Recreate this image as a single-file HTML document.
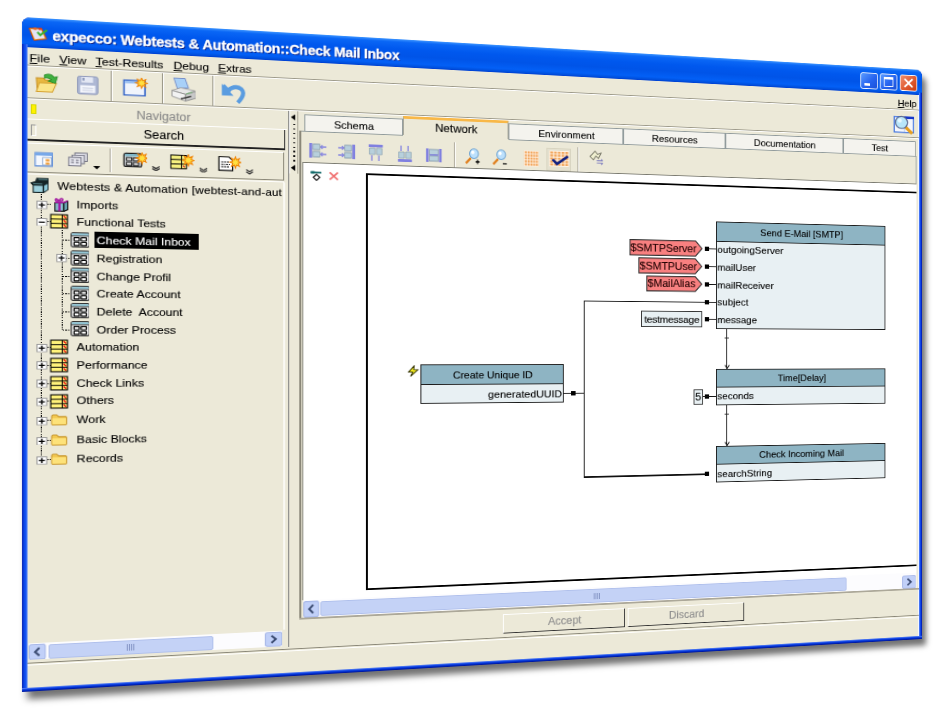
<!DOCTYPE html>
<html><head><meta charset="utf-8"><style>
html,body{margin:0;padding:0;}
body{width:945px;height:709px;overflow:hidden;background:#fff;position:relative;font-family:"Liberation Sans",sans-serif;}
#win{position:absolute;left:0;top:0;width:960px;height:700px;transform-origin:0 0;transform:matrix3d(1.116417692,0.06879210603,0,0.0001940538957,0,0.9642857143,0,0,0,0,1,0,22,17,0,1);box-shadow:5px 8px 7px rgba(0,0,0,0.55);border-radius:8px 8px 0 0;}
.t{position:absolute;white-space:nowrap;line-height:14px;font-size:11px;color:#000;-webkit-text-stroke:0.12px currentColor;}
.tc{position:absolute;left:0;right:0;top:50%;transform:translateY(-50%);text-align:center;font-size:11px;line-height:14px;white-space:nowrap;color:#000;-webkit-text-stroke:0.12px currentColor;}
svg{display:block;}
</style></head><body>
<div id="win">
<div style="position:absolute;left:0px;top:0px;width:960px;height:700px;background:#0831D9;border-radius:8px 8px 0 0;box-shadow:inset -1px -1px 0 #001C98, inset 1px 0 0 #0030C0;"></div>
<div style="position:absolute;left:0px;top:0px;width:960px;height:31px;border-radius:8px 8px 0 0;background:linear-gradient(to bottom,#3D95FF 0%,#0A67F6 10%,#0058EE 35%,#0054E8 60%,#0360F6 85%,#0050DE 95%,#003DD0 100%);"></div>
<div style="position:absolute;left:0px;top:28px;width:4.5px;height:672px;background:linear-gradient(to right,#0018A8 0%,#0A46E8 35%,#1A5AF6 80%,#7EA4F4 100%);"></div>
<div style="position:absolute;left:955.5px;top:28px;width:4.5px;height:672px;background:linear-gradient(to right,#A8C0F4 0%,#2A62F8 20%,#0840E8 60%,#0010A0 100%);"></div>
<div style="position:absolute;left:0px;top:696px;width:960px;height:4px;background:linear-gradient(to bottom,#7E9CEC 0%,#1A50F0 25%,#0030D0 60%,#001090 100%);"></div>
<div style="position:absolute;left:4.5px;top:31px;width:951.0px;height:665px;background:#ECE9D8;box-shadow:inset -1px 0 0 #fff;"></div>
<div class="t" style="left:27.5px;top:10.5px;font-weight:bold;font-size:14px;color:#fff;text-shadow:1px 1px 0 #0A1E80;letter-spacing:-0.2px;-webkit-text-stroke:0.3px #fff;">expecco: Webtests &amp; Automation::Check Mail Inbox</div>
<svg style="position:absolute;left:6.3px;top:9.64px" width="16.91" height="14.22" viewBox="0 0 20 16" preserveAspectRatio="none"><path d="M0.4 1.2 L14 0.8 L19.3 13 L5.7 15.3 Z" fill="#F5A030" stroke="#C04010" stroke-width="0.9"/>
<path d="M2.2 2.4 L13.2 2.1 L17.2 12 L6.6 13.7 Z" fill="#E4E4F6"/>
<path d="M5.4 0.3 H8.6 V3 H5.4 Z" fill="#F06820"/><path d="M10.5 0.4 H14 V2.8 H10.5 Z" fill="#E83818"/>
<path d="M9.4 5.4 L12.4 8.8 L19.6 2.4" stroke="#38B030" stroke-width="2.3" fill="none"/></svg>
<div style="position:absolute;left:882.5px;top:7px;width:22.0px;height:20px;background:linear-gradient(135deg,#5A9CFF,#2664F0 55%,#1A50D8);border:1.2px solid #fff;border-radius:3px;box-sizing:border-box;"></div>
<div style="position:absolute;left:906.6px;top:7px;width:22.0px;height:20px;background:linear-gradient(135deg,#5A9CFF,#2664F0 55%,#1A50D8);border:1.2px solid #fff;border-radius:3px;box-sizing:border-box;"></div>
<div style="position:absolute;left:931.5px;top:7px;width:22.0px;height:20px;background:linear-gradient(135deg,#F09070,#E05A30 55%,#C83A10);border:1.2px solid #fff;border-radius:3px;box-sizing:border-box;"></div>
<div style="position:absolute;left:887.5px;top:19.5px;width:7.0px;height:3.0px;background:#fff;"></div>
<div style="position:absolute;left:911.5px;top:11px;width:12.0px;height:12px;border:1.5px solid #fff;border-top-width:3px;box-sizing:border-box;"></div>
<svg style="position:absolute;left:931.5px;top:7px" width="22" height="20"><path d="M6 5 L16 15 M16 5 L6 15" stroke="#fff" stroke-width="2.4"/></svg>
<div class="t" style="left:6.8px;top:35px;font-size:11.5px;"><u>F</u>ile</div>
<div class="t" style="left:33.8px;top:35px;font-size:11.5px;"><u>V</u>iew</div>
<div class="t" style="left:67px;top:35px;font-size:11.5px;"><u>T</u>est-Results</div>
<div class="t" style="left:140px;top:35px;font-size:11.5px;"><u>D</u>ebug</div>
<div class="t" style="left:182.5px;top:35px;font-size:11.5px;"><u>E</u>xtras</div>
<div class="t" style="left:929.5px;top:35px;font-size:11.5px;"><u>H</u>elp</div>
<div style="position:absolute;left:4.5px;top:49px;width:951.0px;height:1.2px;background:#9D9A8A;"></div>
<div style="position:absolute;left:4.5px;top:50px;width:951.0px;height:1px;background:#fff;"></div>
<div style="position:absolute;left:4.5px;top:83px;width:951.0px;height:1.2px;background:#9D9A8A;"></div>
<div style="position:absolute;left:4.5px;top:84px;width:951.0px;height:1px;background:#fff;"></div>
<div style="position:absolute;left:81px;top:51px;width:1.2px;height:32px;background:#9D9A8A;border-right:1px solid #fff;"></div>
<div style="position:absolute;left:129px;top:51px;width:1.2px;height:32px;background:#9D9A8A;border-right:1px solid #fff;"></div>
<div style="position:absolute;left:177px;top:51px;width:1.2px;height:32px;background:#9D9A8A;border-right:1px solid #fff;"></div>
<svg style="position:absolute;left:12.35px;top:56.34px" width="21.87" height="22.56" viewBox="0 0 24 22" preserveAspectRatio="none">
<path d="M1 6 L8 6 L10 8 L17 8 L17 19 L2 20 Z" fill="#E8B840" stroke="#C89020" stroke-width="1"/>
<path d="M4 11 L21 11 L17 20 L1 20 Z" fill="#FBE58A" stroke="#D4A030" stroke-width="1"/>
<path d="M9 3 Q15 0 19 5 L22 4 L20 11 L13 9 L16 7.5 Q13 5 9 6 Z" fill="#40B040" stroke="#208820" stroke-width="0.8"/>
</svg>
<svg style="position:absolute;left:48.74px;top:56.99px" width="21.62" height="21.36" viewBox="0 0 22 22" preserveAspectRatio="none">
<rect x="1.5" y="1.5" width="19" height="19" rx="2" fill="#AEB8D4" stroke="#8A96B8" stroke-width="1"/>
<rect x="5" y="2" width="11" height="6" fill="#E4E8F4"/>
<rect x="6" y="3" width="2" height="3" fill="#8A96B8"/>
<rect x="4" y="11" width="14" height="8" fill="#F4F6FC"/>
<path d="M6 14 H16 M6 16.5 H16" stroke="#C8CEE0" stroke-width="1"/>
</svg>
<svg style="position:absolute;left:92.16px;top:57.08px" width="24.33" height="20.27" viewBox="0 0 26 22" preserveAspectRatio="none">
<rect x="1.5" y="3.5" width="21" height="17" fill="#F0F4FC" stroke="#3464C8" stroke-width="1.6"/>
<rect x="2" y="4" width="20" height="3" fill="#9CC0F0"/>
<path d="M25.00,6.00 L21.77,7.15 L23.24,10.24 L20.15,8.77 L19.00,12.00 L17.85,8.77 L14.76,10.24 L16.23,7.15 L13.00,6.00 L16.23,4.85 L14.76,1.76 L17.85,3.23 L19.00,0.00 L20.15,3.23 L23.24,1.76 L21.77,4.85Z" fill="#FFE040" stroke="#F08000" stroke-width="1"/></svg>
<svg style="position:absolute;left:137.55px;top:55.29px" width="23.8" height="25.02" viewBox="0 0 24 22" preserveAspectRatio="none">
<path d="M2.4 0.5 L13 0.5 L16.3 9 L5.7 10.2 Z" fill="#A8D0F8" stroke="#7890C8" stroke-width="0.9"/>
<path d="M0.5 12 L9 9.3 L22.5 11.5 L13.5 15.2 Z" fill="#E8E8E8" stroke="#9A9A9A" stroke-width="0.8"/>
<path d="M0.5 12 L13.5 15.2 L13.5 21.5 L0.5 17.5 Z" fill="#F2F2F2" stroke="#8A8A8A" stroke-width="0.8"/>
<path d="M13.5 15.2 L23.5 12 L23.5 18.5 L13.5 21.5 Z" fill="#C8C8C8" stroke="#8A8A8A" stroke-width="0.8"/>
<path d="M9 19.5 L19 17" stroke="#404040" stroke-width="1.4"/>
<path d="M14 15 L20 13" stroke="#60B060" stroke-width="0.8"/>
</svg>
<svg style="position:absolute;left:185.37px;top:58.1px" width="24.23" height="21.7" viewBox="0 0 24 20" preserveAspectRatio="none">
<path d="M6.5 7.5 Q14 1 20 5.5 Q24.5 10 16.5 19" stroke="#5A9CE0" stroke-width="4" fill="none"/>
<path d="M1.2 1 L1.2 12.5 L12.5 12.5 Z" fill="#5A9CE0"/>
<path d="M2.5 2.5 L9 9" stroke="#5A9CE0" stroke-width="3.5"/>
</svg>
<svg style="position:absolute;left:923.52px;top:55.9px" width="27.63" height="24.46" viewBox="0 0 24 22" preserveAspectRatio="none"><rect x="1" y="2.5" width="21" height="17" fill="#F4F6FC" stroke="#4A7AE0" stroke-width="1.3"/>
<rect x="12" y="2" width="10.6" height="2.6" fill="#1434C8"/>
<path d="M12 3 V19" stroke="#B8C8F0" stroke-width="1"/>
<path d="M13 13.5 L20.5 20.5" stroke="#E8A020" stroke-width="3.4"/>
<circle cx="8.8" cy="8.8" r="6.6" fill="#B8E6FA" stroke="#5A6890" stroke-width="1.2"/><circle cx="7" cy="6.8" r="2.2" fill="#E8F8FF"/></svg>
<div style="position:absolute;left:5px;top:85px;width:245px;height:21px;background:#ECE9D8;border-bottom:1px solid #fff;box-sizing:border-box;"></div>
<div style="position:absolute;left:7.6px;top:89.7px;width:5.0px;height:10.6px;background:#FFF200;border:1px solid #D8D800;box-sizing:border-box;"></div>
<div class="t" style="left:130.6px;top:90px;font-size:12px;color:#8A8A8A;transform:translateX(-50%);">Navigator</div>
<div style="position:absolute;left:5px;top:106px;width:242.5px;height:21.5px;background:#ECE9D8;border-bottom:2px solid #222;border-right:1.6px solid #333;box-sizing:border-box;"></div>
<div style="position:absolute;left:7.6px;top:110.5px;width:5.0px;height:12.0px;border:1px solid #999;border-right-color:#fff;border-bottom-color:#fff;box-sizing:border-box;"></div>
<div class="t" style="left:130.8px;top:110px;font-size:12px;color:#000;transform:translateX(-50%);">Search</div>
<div style="position:absolute;left:5px;top:129.6px;width:241.5px;height:31.9px;border-top:1.2px solid #fff;border-right:1.3px solid #8A8778;border-bottom:1.3px solid #8A8778;box-sizing:border-box;"></div>
<div style="position:absolute;left:5px;top:161.5px;width:241.5px;height:1.0px;background:#fff;"></div>
<svg style="position:absolute;left:10.54px;top:138.95px" width="17.3" height="15.9" viewBox="0 0 20 16" preserveAspectRatio="none">
<rect x="1" y="1" width="18" height="14" fill="#F4F8FF" stroke="#5A8AD8" stroke-width="1.2"/>
<rect x="1" y="1" width="18" height="3" fill="#78A8E8"/>
<rect x="9" y="6" width="9" height="8" fill="#FFFFFF" stroke="#7A9AC8" stroke-width="0.8"/>
<rect x="12" y="7.5" width="4" height="2.5" fill="#F0A040"/><rect x="12" y="11" width="4" height="2.5" fill="#F0A040"/>
</svg>
<svg style="position:absolute;left:40.51px;top:138.35px" width="19.25" height="15.36" viewBox="0 0 22 16" preserveAspectRatio="none">
<rect x="8" y="1" width="13" height="9" fill="#E0E0E8" stroke="#707080" stroke-width="1"/>
<rect x="5" y="3.5" width="13" height="9" fill="#E0E0E8" stroke="#707080" stroke-width="1"/>
<rect x="1.5" y="6" width="13" height="9" fill="#E8E8F0" stroke="#707080" stroke-width="1"/>
<path d="M4 9 H7 M4 11.5 H7 M9 9 H12 M9 11.5 H12" stroke="#505060" stroke-width="1"/>
</svg>
<svg style="position:absolute;left:63.72px;top:150.84px" width="8.31" height="5.25" viewBox="0 0 10 6" preserveAspectRatio="none"><path d="M1 1 H9 L5 5 Z" fill="#000"/></svg>
<div style="position:absolute;left:79.9px;top:132.53px;width:0.93px;height:25.27px;background:#ACA899;border-right:1px solid #fff;"></div>
<svg style="position:absolute;left:91.51px;top:136.27px" width="23.76" height="16.15" viewBox="0 0 26 16" preserveAspectRatio="none">
<rect x="1.5" y="1.5" width="18" height="14" rx="2" fill="#D8DCE0" stroke="#202020" stroke-width="1.4"/>
<rect x="2.5" y="2" width="16" height="2.5" fill="#7EB6C8"/>
<rect x="4" y="6" width="5.5" height="3" fill="#fff" stroke="#000" stroke-width="1"/><rect x="11" y="6" width="5.5" height="3" fill="#fff" stroke="#000" stroke-width="1"/>
<rect x="4" y="11" width="5.5" height="3" fill="#fff" stroke="#000" stroke-width="1"/><rect x="11" y="11" width="5.5" height="3" fill="#fff" stroke="#000" stroke-width="1"/>
<path d="M26.00,6.00 L22.77,7.15 L24.24,10.24 L21.15,8.77 L20.00,12.00 L18.85,8.77 L15.76,10.24 L17.23,7.15 L14.00,6.00 L17.23,4.85 L15.76,1.76 L18.85,3.23 L20.00,0.00 L21.15,3.23 L24.24,1.76 L22.77,4.85Z" fill="#FFE040" stroke="#F08000" stroke-width="1"/></svg>
<svg style="position:absolute;left:118.66px;top:150.02px" width="8.77" height="5.3" viewBox="0 0 10 6" preserveAspectRatio="none"><path d="M1 0.5 L5 3 L9 0.5 M1 3 L5 5.5 L9 3" stroke="#333" stroke-width="1.4" fill="none"/></svg>
<svg style="position:absolute;left:136.22px;top:135.51px" width="24.17" height="17.35" viewBox="0 0 26 17" preserveAspectRatio="none">
<rect x="1" y="1" width="17" height="15" fill="#000"/>
<rect x="2" y="2" width="10" height="3.6" fill="#F5F080"/><rect x="2" y="6.6" width="10" height="3.6" fill="#F5F080"/><rect x="2" y="11.2" width="10" height="3.8" fill="#F5F080"/>
<rect x="13" y="2" width="4" height="3.6" fill="#F5F080"/><rect x="13" y="6.6" width="4" height="3.6" fill="#F5F080"/><rect x="13" y="11.2" width="4" height="3.8" fill="#F5F080"/>
<path d="M14 12.5 L16 14" stroke="#E02020" stroke-width="1.2"/>
<path d="M25.50,6.50 L22.27,7.65 L23.74,10.74 L20.65,9.27 L19.50,12.50 L18.35,9.27 L15.26,10.74 L16.73,7.65 L13.50,6.50 L16.73,5.35 L15.26,2.26 L18.35,3.73 L19.50,0.50 L20.65,3.73 L23.74,2.26 L22.27,5.35Z" fill="#FFE040" stroke="#F08000" stroke-width="1"/></svg>
<svg style="position:absolute;left:163.65px;top:150.02px" width="8.92" height="5.46" viewBox="0 0 10 6" preserveAspectRatio="none"><path d="M1 0.5 L5 3 L9 0.5 M1 3 L5 5.5 L9 3" stroke="#333" stroke-width="1.4" fill="none"/></svg>
<svg style="position:absolute;left:181.51px;top:135.82px" width="23.81" height="17.18" viewBox="0 0 26 17" preserveAspectRatio="none">
<path d="M1.5 1.5 H12 L16 5 V16 H1.5 Z" fill="#fff" stroke="#000" stroke-width="1.2"/>
<path d="M4 7 H13 M4 9.5 H8 M9 9.5 H13 M4 12 H13" stroke="#000" stroke-width="1" stroke-dasharray="2 1"/>
<path d="M25.00,7.00 L21.77,8.15 L23.24,11.24 L20.15,9.77 L19.00,13.00 L17.85,9.77 L14.76,11.24 L16.23,8.15 L13.00,7.00 L16.23,5.85 L14.76,2.76 L17.85,4.23 L19.00,1.00 L20.15,4.23 L23.24,2.76 L21.77,5.85Z" fill="#FFE040" stroke="#F08000" stroke-width="1"/></svg>
<svg style="position:absolute;left:208.63px;top:150.17px" width="8.19" height="5.5" viewBox="0 0 10 6" preserveAspectRatio="none"><path d="M1 0.5 L5 3 L9 0.5 M1 3 L5 5.5 L9 3" stroke="#333" stroke-width="1.4" fill="none"/></svg>
<div style="position:absolute;left:246px;top:163px;width:2.2px;height:486px;background:#FAF9F4;"></div>
<div style="position:absolute;left:250.6px;top:85px;width:1.3px;height:583px;background:#808080;"></div>
<div style="position:absolute;left:17.2px;top:183px;width:1.0px;height:272px;background:repeating-linear-gradient(to bottom,#000 0 1.2px,transparent 1.2px 2.4px);"></div>
<div style="position:absolute;left:35.8px;top:220px;width:1.0px;height:104px;background:repeating-linear-gradient(to bottom,#000 0 1.2px,transparent 1.2px 2.4px);"></div>
<svg style="position:absolute;left:7.2px;top:166.4px" width="17.3" height="16.3" viewBox="0 0 19 16" preserveAspectRatio="none">
<path d="M6.6 0.3 H18.8 V12.3 L14 15.8 H2.8 V8 L0.2 5.5 L5.5 3.8 Z" fill="#142426"/>
<path d="M8.5 1.8 H17.8" stroke="#5E8E94" stroke-width="1"/>
<path d="M3.5 6.3 H12.5" stroke="#5E8E94" stroke-width="0.9"/>
<rect x="3.9" y="8.3" width="8.9" height="6.3" fill="#9CD0DC"/>
<path d="M14.3 8.2 L17.7 6.2 V12 L14.3 14.3 Z" fill="#8CC8D8"/>
</svg>
<div class="t" style="left:32px;top:167.2px;font-size:11.5px;width:214px;overflow:hidden;letter-spacing:0.12px;">Webtests &amp; Automation [webtest-and-aut</div>
<div style="position:absolute;left:18px;top:193.1px;width:9px;height:1.2px;background:repeating-linear-gradient(to right,#000 0 1.2px,transparent 1.2px 2.4px);"></div>
<svg style="position:absolute;left:12.8px;top:190.0px" width="9.8" height="8.6" viewBox="0 0 10 9" preserveAspectRatio="none"><rect x="0.5" y="0.5" width="9" height="8" fill="#fff" stroke="#9A9A9A" stroke-width="1"/><path d="M2.2 4.5 H7.8 M5 1.8 V7.2" stroke="#000" stroke-width="1.3"/></svg>
<svg style="position:absolute;left:27.9px;top:185.8px" width="14.4" height="15.4" viewBox="0 0 16 16" preserveAspectRatio="none">
<path d="M2 6 L11 6 L11 15 L2 15 Z" fill="#8CC4D4" stroke="#111" stroke-width="1.2"/>
<path d="M11 6 L15 4 L15 13 L11 15 Z" fill="#6AA8B8" stroke="#111" stroke-width="1.2"/>
<path d="M6.5 6 V15" stroke="#A0169F" stroke-width="2.4"/>
<path d="M2 5.5 L11 5.5 L15 3.5" stroke="#A0169F" stroke-width="1.6" fill="none"/>
<path d="M6 4 Q3 0 2.5 3 Q3 5 6 4 Q8 0 10 2 Q10 5 6 4" stroke="#A0169F" stroke-width="1.6" fill="none"/>
</svg>
<div class="t" style="left:49.6px;top:186.1px;font-size:11.5px;">Imports</div>
<div style="position:absolute;left:18px;top:210.8px;width:9px;height:1.2px;background:repeating-linear-gradient(to right,#000 0 1.2px,transparent 1.2px 2.4px);"></div>
<svg style="position:absolute;left:12.8px;top:207.7px" width="9.8" height="8.6" viewBox="0 0 10 9" preserveAspectRatio="none"><rect x="0.5" y="0.5" width="9" height="8" fill="#fff" stroke="#9A9A9A" stroke-width="1"/><path d="M2.2 4.5 H7.8" stroke="#000" stroke-width="1.3"/></svg>
<svg style="position:absolute;left:25.4px;top:203.1px" width="17.2" height="16.0" viewBox="0 0 18 16" preserveAspectRatio="none">
<rect x="0.5" y="0.5" width="17" height="15" fill="#000"/>
<rect x="1.6" y="1.6" width="10" height="3.6" fill="#FFF27A"/><rect x="1.6" y="6.2" width="10" height="3.6" fill="#FFF27A"/><rect x="1.6" y="10.8" width="10" height="3.6" fill="#FFF27A"/>
<rect x="12.6" y="1.6" width="3.8" height="3.6" fill="#FFF27A"/><rect x="12.6" y="6.2" width="3.8" height="3.6" fill="#FFF27A"/><rect x="12.6" y="10.8" width="3.8" height="3.6" fill="#FFF27A"/>
<path d="M13.2 2.2 L15.8 4.6 M13.2 6.8 L15.8 9.2 M13.2 11.4 L15.8 13.8" stroke="#F01818" stroke-width="1.4"/>
</svg>
<div class="t" style="left:49.6px;top:203.8px;font-size:11.5px;">Functional Tests</div>
<div style="position:absolute;left:36.5px;top:229.8px;width:8.5px;height:1.2px;background:repeating-linear-gradient(to right,#000 0 1.2px,transparent 1.2px 2.4px);"></div>
<svg style="position:absolute;left:43.7px;top:221.7px" width="17.8" height="16.0" viewBox="0 0 18 16" preserveAspectRatio="none">
<rect x="0.6" y="0.6" width="16.8" height="14.8" rx="1.6" fill="#F2F2F2" stroke="#333" stroke-width="1.1"/>
<rect x="1.2" y="1.2" width="15.6" height="2.3" fill="#8EC4D4"/><path d="M1 3.9 H17" stroke="#333" stroke-width="0.9"/>
<rect x="3.3" y="5.7" width="4.8" height="3.3" rx="0.4" fill="#fff" stroke="#000" stroke-width="1.2"/><rect x="9.9" y="5.7" width="4.8" height="3.3" rx="0.4" fill="#fff" stroke="#000" stroke-width="1.2"/>
<rect x="3.3" y="10.5" width="4.8" height="3.3" rx="0.4" fill="#fff" stroke="#000" stroke-width="1.2"/><rect x="9.9" y="10.5" width="4.8" height="3.3" rx="0.4" fill="#fff" stroke="#000" stroke-width="1.2"/>
</svg>
<div style="position:absolute;left:66px;top:221.3px;width:98.2px;height:16.7px;background:#000;"></div>
<div class="t" style="left:68px;top:222.8px;font-size:11.5px;color:#fff;">Check Mail Inbox</div>
<div style="position:absolute;left:36.5px;top:249.0px;width:8.5px;height:1.2px;background:repeating-linear-gradient(to right,#000 0 1.2px,transparent 1.2px 2.4px);"></div>
<svg style="position:absolute;left:31.2px;top:245.3px" width="9.6" height="8.4" viewBox="0 0 10 9" preserveAspectRatio="none"><rect x="0.5" y="0.5" width="9" height="8" fill="#fff" stroke="#9A9A9A" stroke-width="1"/><path d="M2.2 4.5 H7.8 M5 1.8 V7.2" stroke="#000" stroke-width="1.3"/></svg>
<svg style="position:absolute;left:43.7px;top:240.9px" width="17.8" height="16.0" viewBox="0 0 18 16" preserveAspectRatio="none">
<rect x="0.6" y="0.6" width="16.8" height="14.8" rx="1.6" fill="#F2F2F2" stroke="#333" stroke-width="1.1"/>
<rect x="1.2" y="1.2" width="15.6" height="2.3" fill="#8EC4D4"/><path d="M1 3.9 H17" stroke="#333" stroke-width="0.9"/>
<rect x="3.3" y="5.7" width="4.8" height="3.3" rx="0.4" fill="#fff" stroke="#000" stroke-width="1.2"/><rect x="9.9" y="5.7" width="4.8" height="3.3" rx="0.4" fill="#fff" stroke="#000" stroke-width="1.2"/>
<rect x="3.3" y="10.5" width="4.8" height="3.3" rx="0.4" fill="#fff" stroke="#000" stroke-width="1.2"/><rect x="9.9" y="10.5" width="4.8" height="3.3" rx="0.4" fill="#fff" stroke="#000" stroke-width="1.2"/>
</svg>
<div class="t" style="left:68px;top:242.0px;font-size:11.5px;">Registration</div>
<div style="position:absolute;left:36.5px;top:267.5px;width:8.5px;height:1.2px;background:repeating-linear-gradient(to right,#000 0 1.2px,transparent 1.2px 2.4px);"></div>
<svg style="position:absolute;left:43.7px;top:259.4px" width="17.8" height="16.0" viewBox="0 0 18 16" preserveAspectRatio="none">
<rect x="0.6" y="0.6" width="16.8" height="14.8" rx="1.6" fill="#F2F2F2" stroke="#333" stroke-width="1.1"/>
<rect x="1.2" y="1.2" width="15.6" height="2.3" fill="#8EC4D4"/><path d="M1 3.9 H17" stroke="#333" stroke-width="0.9"/>
<rect x="3.3" y="5.7" width="4.8" height="3.3" rx="0.4" fill="#fff" stroke="#000" stroke-width="1.2"/><rect x="9.9" y="5.7" width="4.8" height="3.3" rx="0.4" fill="#fff" stroke="#000" stroke-width="1.2"/>
<rect x="3.3" y="10.5" width="4.8" height="3.3" rx="0.4" fill="#fff" stroke="#000" stroke-width="1.2"/><rect x="9.9" y="10.5" width="4.8" height="3.3" rx="0.4" fill="#fff" stroke="#000" stroke-width="1.2"/>
</svg>
<div class="t" style="left:68px;top:260.5px;font-size:11.5px;">Change Profil</div>
<div style="position:absolute;left:36.5px;top:286.0px;width:8.5px;height:1.2px;background:repeating-linear-gradient(to right,#000 0 1.2px,transparent 1.2px 2.4px);"></div>
<svg style="position:absolute;left:43.7px;top:277.9px" width="17.8" height="16.0" viewBox="0 0 18 16" preserveAspectRatio="none">
<rect x="0.6" y="0.6" width="16.8" height="14.8" rx="1.6" fill="#F2F2F2" stroke="#333" stroke-width="1.1"/>
<rect x="1.2" y="1.2" width="15.6" height="2.3" fill="#8EC4D4"/><path d="M1 3.9 H17" stroke="#333" stroke-width="0.9"/>
<rect x="3.3" y="5.7" width="4.8" height="3.3" rx="0.4" fill="#fff" stroke="#000" stroke-width="1.2"/><rect x="9.9" y="5.7" width="4.8" height="3.3" rx="0.4" fill="#fff" stroke="#000" stroke-width="1.2"/>
<rect x="3.3" y="10.5" width="4.8" height="3.3" rx="0.4" fill="#fff" stroke="#000" stroke-width="1.2"/><rect x="9.9" y="10.5" width="4.8" height="3.3" rx="0.4" fill="#fff" stroke="#000" stroke-width="1.2"/>
</svg>
<div class="t" style="left:68px;top:279.0px;font-size:11.5px;">Create Account</div>
<div style="position:absolute;left:36.5px;top:304.5px;width:8.5px;height:1.2px;background:repeating-linear-gradient(to right,#000 0 1.2px,transparent 1.2px 2.4px);"></div>
<svg style="position:absolute;left:43.7px;top:296.4px" width="17.8" height="16.0" viewBox="0 0 18 16" preserveAspectRatio="none">
<rect x="0.6" y="0.6" width="16.8" height="14.8" rx="1.6" fill="#F2F2F2" stroke="#333" stroke-width="1.1"/>
<rect x="1.2" y="1.2" width="15.6" height="2.3" fill="#8EC4D4"/><path d="M1 3.9 H17" stroke="#333" stroke-width="0.9"/>
<rect x="3.3" y="5.7" width="4.8" height="3.3" rx="0.4" fill="#fff" stroke="#000" stroke-width="1.2"/><rect x="9.9" y="5.7" width="4.8" height="3.3" rx="0.4" fill="#fff" stroke="#000" stroke-width="1.2"/>
<rect x="3.3" y="10.5" width="4.8" height="3.3" rx="0.4" fill="#fff" stroke="#000" stroke-width="1.2"/><rect x="9.9" y="10.5" width="4.8" height="3.3" rx="0.4" fill="#fff" stroke="#000" stroke-width="1.2"/>
</svg>
<div class="t" style="left:68px;top:297.5px;font-size:11.5px;">Delete&nbsp; Account</div>
<div style="position:absolute;left:36.5px;top:323.5px;width:8.5px;height:1.2px;background:repeating-linear-gradient(to right,#000 0 1.2px,transparent 1.2px 2.4px);"></div>
<svg style="position:absolute;left:43.7px;top:315.4px" width="17.8" height="16.0" viewBox="0 0 18 16" preserveAspectRatio="none">
<rect x="0.6" y="0.6" width="16.8" height="14.8" rx="1.6" fill="#F2F2F2" stroke="#333" stroke-width="1.1"/>
<rect x="1.2" y="1.2" width="15.6" height="2.3" fill="#8EC4D4"/><path d="M1 3.9 H17" stroke="#333" stroke-width="0.9"/>
<rect x="3.3" y="5.7" width="4.8" height="3.3" rx="0.4" fill="#fff" stroke="#000" stroke-width="1.2"/><rect x="9.9" y="5.7" width="4.8" height="3.3" rx="0.4" fill="#fff" stroke="#000" stroke-width="1.2"/>
<rect x="3.3" y="10.5" width="4.8" height="3.3" rx="0.4" fill="#fff" stroke="#000" stroke-width="1.2"/><rect x="9.9" y="10.5" width="4.8" height="3.3" rx="0.4" fill="#fff" stroke="#000" stroke-width="1.2"/>
</svg>
<div class="t" style="left:68px;top:316.5px;font-size:11.5px;">Order Process</div>
<div style="position:absolute;left:18px;top:342.1px;width:9px;height:1.2px;background:repeating-linear-gradient(to right,#000 0 1.2px,transparent 1.2px 2.4px);"></div>
<svg style="position:absolute;left:12.8px;top:339.0px" width="9.8" height="8.6" viewBox="0 0 10 9" preserveAspectRatio="none"><rect x="0.5" y="0.5" width="9" height="8" fill="#fff" stroke="#9A9A9A" stroke-width="1"/><path d="M2.2 4.5 H7.8 M5 1.8 V7.2" stroke="#000" stroke-width="1.3"/></svg>
<svg style="position:absolute;left:25.4px;top:334.4px" width="17.2" height="16.0" viewBox="0 0 18 16" preserveAspectRatio="none">
<rect x="0.5" y="0.5" width="17" height="15" fill="#000"/>
<rect x="1.6" y="1.6" width="10" height="3.6" fill="#FFF27A"/><rect x="1.6" y="6.2" width="10" height="3.6" fill="#FFF27A"/><rect x="1.6" y="10.8" width="10" height="3.6" fill="#FFF27A"/>
<rect x="12.6" y="1.6" width="3.8" height="3.6" fill="#FFF27A"/><rect x="12.6" y="6.2" width="3.8" height="3.6" fill="#FFF27A"/><rect x="12.6" y="10.8" width="3.8" height="3.6" fill="#FFF27A"/>
<path d="M13.2 2.2 L15.8 4.6 M13.2 6.8 L15.8 9.2 M13.2 11.4 L15.8 13.8" stroke="#F01818" stroke-width="1.4"/>
</svg>
<div class="t" style="left:49.6px;top:335.1px;font-size:11.5px;">Automation</div>
<div style="position:absolute;left:18px;top:360.5px;width:9px;height:1.2px;background:repeating-linear-gradient(to right,#000 0 1.2px,transparent 1.2px 2.4px);"></div>
<svg style="position:absolute;left:12.8px;top:357.4px" width="9.8" height="8.6" viewBox="0 0 10 9" preserveAspectRatio="none"><rect x="0.5" y="0.5" width="9" height="8" fill="#fff" stroke="#9A9A9A" stroke-width="1"/><path d="M2.2 4.5 H7.8 M5 1.8 V7.2" stroke="#000" stroke-width="1.3"/></svg>
<svg style="position:absolute;left:25.4px;top:352.8px" width="17.2" height="16.0" viewBox="0 0 18 16" preserveAspectRatio="none">
<rect x="0.5" y="0.5" width="17" height="15" fill="#000"/>
<rect x="1.6" y="1.6" width="10" height="3.6" fill="#FFF27A"/><rect x="1.6" y="6.2" width="10" height="3.6" fill="#FFF27A"/><rect x="1.6" y="10.8" width="10" height="3.6" fill="#FFF27A"/>
<rect x="12.6" y="1.6" width="3.8" height="3.6" fill="#FFF27A"/><rect x="12.6" y="6.2" width="3.8" height="3.6" fill="#FFF27A"/><rect x="12.6" y="10.8" width="3.8" height="3.6" fill="#FFF27A"/>
<path d="M13.2 2.2 L15.8 4.6 M13.2 6.8 L15.8 9.2 M13.2 11.4 L15.8 13.8" stroke="#F01818" stroke-width="1.4"/>
</svg>
<div class="t" style="left:49.6px;top:353.5px;font-size:11.5px;">Performance</div>
<div style="position:absolute;left:18px;top:379.5px;width:9px;height:1.2px;background:repeating-linear-gradient(to right,#000 0 1.2px,transparent 1.2px 2.4px);"></div>
<svg style="position:absolute;left:12.8px;top:376.4px" width="9.8" height="8.6" viewBox="0 0 10 9" preserveAspectRatio="none"><rect x="0.5" y="0.5" width="9" height="8" fill="#fff" stroke="#9A9A9A" stroke-width="1"/><path d="M2.2 4.5 H7.8 M5 1.8 V7.2" stroke="#000" stroke-width="1.3"/></svg>
<svg style="position:absolute;left:25.4px;top:371.8px" width="17.2" height="16.0" viewBox="0 0 18 16" preserveAspectRatio="none">
<rect x="0.5" y="0.5" width="17" height="15" fill="#000"/>
<rect x="1.6" y="1.6" width="10" height="3.6" fill="#FFF27A"/><rect x="1.6" y="6.2" width="10" height="3.6" fill="#FFF27A"/><rect x="1.6" y="10.8" width="10" height="3.6" fill="#FFF27A"/>
<rect x="12.6" y="1.6" width="3.8" height="3.6" fill="#FFF27A"/><rect x="12.6" y="6.2" width="3.8" height="3.6" fill="#FFF27A"/><rect x="12.6" y="10.8" width="3.8" height="3.6" fill="#FFF27A"/>
<path d="M13.2 2.2 L15.8 4.6 M13.2 6.8 L15.8 9.2 M13.2 11.4 L15.8 13.8" stroke="#F01818" stroke-width="1.4"/>
</svg>
<div class="t" style="left:49.6px;top:372.5px;font-size:11.5px;">Check Links</div>
<div style="position:absolute;left:18px;top:398.2px;width:9px;height:1.2px;background:repeating-linear-gradient(to right,#000 0 1.2px,transparent 1.2px 2.4px);"></div>
<svg style="position:absolute;left:12.8px;top:395.1px" width="9.8" height="8.6" viewBox="0 0 10 9" preserveAspectRatio="none"><rect x="0.5" y="0.5" width="9" height="8" fill="#fff" stroke="#9A9A9A" stroke-width="1"/><path d="M2.2 4.5 H7.8 M5 1.8 V7.2" stroke="#000" stroke-width="1.3"/></svg>
<svg style="position:absolute;left:25.4px;top:390.5px" width="17.2" height="16.0" viewBox="0 0 18 16" preserveAspectRatio="none">
<rect x="0.5" y="0.5" width="17" height="15" fill="#000"/>
<rect x="1.6" y="1.6" width="10" height="3.6" fill="#FFF27A"/><rect x="1.6" y="6.2" width="10" height="3.6" fill="#FFF27A"/><rect x="1.6" y="10.8" width="10" height="3.6" fill="#FFF27A"/>
<rect x="12.6" y="1.6" width="3.8" height="3.6" fill="#FFF27A"/><rect x="12.6" y="6.2" width="3.8" height="3.6" fill="#FFF27A"/><rect x="12.6" y="10.8" width="3.8" height="3.6" fill="#FFF27A"/>
<path d="M13.2 2.2 L15.8 4.6 M13.2 6.8 L15.8 9.2 M13.2 11.4 L15.8 13.8" stroke="#F01818" stroke-width="1.4"/>
</svg>
<div class="t" style="left:49.6px;top:391.2px;font-size:11.5px;">Others</div>
<div style="position:absolute;left:18px;top:418.1px;width:9px;height:1.2px;background:repeating-linear-gradient(to right,#000 0 1.2px,transparent 1.2px 2.4px);"></div>
<svg style="position:absolute;left:12.8px;top:415.0px" width="9.8" height="8.6" viewBox="0 0 10 9" preserveAspectRatio="none"><rect x="0.5" y="0.5" width="9" height="8" fill="#fff" stroke="#9A9A9A" stroke-width="1"/><path d="M2.2 4.5 H7.8 M5 1.8 V7.2" stroke="#000" stroke-width="1.3"/></svg>
<svg style="position:absolute;left:25.7px;top:412.0px" width="15.3" height="12.4" viewBox="0 0 17 13" preserveAspectRatio="none">
<path d="M1 2.5 Q1 1 2.5 1 L6 1 L8 3 L15 3 Q16 3 16 4.5 L16 11 Q16 12 15 12 L2 12 Q1 12 1 11 Z" fill="#F2C850" stroke="#C89830" stroke-width="1.1"/>
<path d="M1.6 4.6 L15.4 4.6 L15.4 11.4 L1.6 11.4 Z" fill="#FDE27A"/>
</svg>
<div class="t" style="left:49.6px;top:411.1px;font-size:11.5px;">Work</div>
<div style="position:absolute;left:18px;top:438.9px;width:9px;height:1.2px;background:repeating-linear-gradient(to right,#000 0 1.2px,transparent 1.2px 2.4px);"></div>
<svg style="position:absolute;left:12.8px;top:435.8px" width="9.8" height="8.6" viewBox="0 0 10 9" preserveAspectRatio="none"><rect x="0.5" y="0.5" width="9" height="8" fill="#fff" stroke="#9A9A9A" stroke-width="1"/><path d="M2.2 4.5 H7.8 M5 1.8 V7.2" stroke="#000" stroke-width="1.3"/></svg>
<svg style="position:absolute;left:25.7px;top:432.8px" width="15.3" height="12.4" viewBox="0 0 17 13" preserveAspectRatio="none">
<path d="M1 2.5 Q1 1 2.5 1 L6 1 L8 3 L15 3 Q16 3 16 4.5 L16 11 Q16 12 15 12 L2 12 Q1 12 1 11 Z" fill="#F2C850" stroke="#C89830" stroke-width="1.1"/>
<path d="M1.6 4.6 L15.4 4.6 L15.4 11.4 L1.6 11.4 Z" fill="#FDE27A"/>
</svg>
<div class="t" style="left:49.6px;top:431.9px;font-size:11.5px;">Basic Blocks</div>
<div style="position:absolute;left:18px;top:459.2px;width:9px;height:1.2px;background:repeating-linear-gradient(to right,#000 0 1.2px,transparent 1.2px 2.4px);"></div>
<svg style="position:absolute;left:12.8px;top:456.1px" width="9.8" height="8.6" viewBox="0 0 10 9" preserveAspectRatio="none"><rect x="0.5" y="0.5" width="9" height="8" fill="#fff" stroke="#9A9A9A" stroke-width="1"/><path d="M2.2 4.5 H7.8 M5 1.8 V7.2" stroke="#000" stroke-width="1.3"/></svg>
<svg style="position:absolute;left:25.7px;top:453.1px" width="15.3" height="12.4" viewBox="0 0 17 13" preserveAspectRatio="none">
<path d="M1 2.5 Q1 1 2.5 1 L6 1 L8 3 L15 3 Q16 3 16 4.5 L16 11 Q16 12 15 12 L2 12 Q1 12 1 11 Z" fill="#F2C850" stroke="#C89830" stroke-width="1.1"/>
<path d="M1.6 4.6 L15.4 4.6 L15.4 11.4 L1.6 11.4 Z" fill="#FDE27A"/>
</svg>
<div class="t" style="left:49.6px;top:452.2px;font-size:11.5px;">Records</div>
<div style="position:absolute;left:6px;top:650px;width:239px;height:17px;background:#FCFCFE;"></div>
<svg style="position:absolute;left:6.2px;top:650.6px" width="15.5" height="16.4" viewBox="0 0 16 16" preserveAspectRatio="none"><rect x="0.5" y="0.5" width="15" height="15" rx="2" fill="#C1D0F8" stroke="#A8B8E8" stroke-width="1"/><path d="M10 4 L6 8 L10 12" stroke="#3A4A70" stroke-width="2" fill="none"/></svg>
<div style="position:absolute;left:23.5px;top:651.5px;width:154.2px;height:15.0px;background:#C4D2F6;border-radius:2px;border:1px solid #B0C0EC;box-sizing:border-box;"></div>
<div style="position:absolute;left:96px;top:655.5px;width:8px;height:7.0px;background:repeating-linear-gradient(to right,#8898C8 0 1px,transparent 1px 2px);"></div>
<svg style="position:absolute;left:227.6px;top:651px" width="17.3" height="15.7" viewBox="0 0 16 16" preserveAspectRatio="none"><rect x="0.5" y="0.5" width="15" height="15" rx="2" fill="#C1D0F8" stroke="#A8B8E8" stroke-width="1"/><path d="M6 4 L10 8 L6 12" stroke="#3A4A70" stroke-width="2" fill="none"/></svg>
<div style="position:absolute;left:251.81px;top:84.82px;width:9.12px;height:68.2px;background:#ECE9D8;border-left:1.2px solid #fff;border-right:1.2px solid #ACA899;box-sizing:border-box;"></div>
<svg style="position:absolute;left:253.09px;top:87.8px" width="5.65" height="7.62" viewBox="0 0 8 8" preserveAspectRatio="none"><path d="M7 0.5 V7.5 L1 4 Z" fill="#000"/></svg>
<svg style="position:absolute;left:253.09px;top:143.29px" width="5.65" height="7.62" viewBox="0 0 8 8" preserveAspectRatio="none"><path d="M7 0.5 V7.5 L1 4 Z" fill="#000"/></svg>
<div style="position:absolute;left:256.36px;top:98.53px;width:1.39px;height:43.0px;background:repeating-linear-gradient(to bottom,#111 0 1.3px,transparent 1.3px 4.9px);"></div>
<div style="position:absolute;left:262px;top:106px;width:1.7px;height:532px;background:#8A8778;"></div>
<div style="position:absolute;left:266.7px;top:88px;width:100.3px;height:18px;background:#F4F3EE;border:1px solid #919B9C;border-bottom:none;box-sizing:border-box;"><div class="tc" style="">Schema</div></div>
<div style="position:absolute;left:367px;top:85.2px;width:111.2px;height:22.8px;background:#ECE9D8;border:1px solid #919B9C;border-bottom:none;box-sizing:border-box;border-top:3px solid #F8B848;border-left-color:#A8A89C;border-right-color:#A8A89C;"><div class="tc" style="font-size:12.2px;top:43%">Network</div></div>
<div style="position:absolute;left:478.2px;top:88px;width:125.8px;height:18px;background:#F4F3EE;border:1px solid #919B9C;border-bottom:none;box-sizing:border-box;"><div class="tc" style="">Environment</div></div>
<div style="position:absolute;left:604px;top:88px;width:117.2px;height:18px;background:#F4F3EE;border:1px solid #919B9C;border-bottom:none;box-sizing:border-box;"><div class="tc" style="">Resources</div></div>
<div style="position:absolute;left:721.2px;top:88px;width:140.6px;height:18px;background:#F4F3EE;border:1px solid #919B9C;border-bottom:none;box-sizing:border-box;"><div class="tc" style="">Documentation</div></div>
<div style="position:absolute;left:861.8px;top:88px;width:90.7px;height:18px;background:#F4F3EE;border:1px solid #919B9C;border-bottom:none;box-sizing:border-box;"><div class="tc" style="">Test</div></div>
<div style="position:absolute;left:263.5px;top:106px;width:689.5px;height:36px;background:#ECE9D8;border-right:1px solid #919B9C;box-sizing:border-box;"></div>
<div style="position:absolute;left:263.5px;top:106px;width:103.5px;height:1px;background:#919B9C;"></div>
<div style="position:absolute;left:478.2px;top:106px;width:474.8px;height:1px;background:#919B9C;"></div>
<div style="position:absolute;left:420px;top:112px;width:1px;height:29px;background:#ACA899;border-right:1px solid #fff;"></div>
<div style="position:absolute;left:553px;top:112px;width:1px;height:29px;background:#ACA899;border-right:1px solid #fff;"></div>
<svg style="position:absolute;left:271px;top:116.5px" width="19" height="20.0" viewBox="0 0 20 20" preserveAspectRatio="none"><rect x="1" y="2" width="3" height="16" fill="#8080E0"/>
<rect x="5" y="3" width="7" height="6" fill="#B8D0DC" stroke="#8AA0B0" stroke-width="0.8"/><rect x="5" y="11" width="7" height="6" fill="#B8D0DC" stroke="#8AA0B0" stroke-width="0.8"/>
<path d="M13 6 H19 M13 14 H19" stroke="#8080E0" stroke-width="1.6"/><path d="M13 6 L15 4 M13 6 L15 8 M13 14 L15 12 M13 14 L15 16" stroke="#8080E0" stroke-width="1.2"/></svg>
<svg style="position:absolute;left:300px;top:116.5px" width="19" height="20.0" viewBox="0 0 20 20" preserveAspectRatio="none"><rect x="16" y="2" width="3" height="16" fill="#8080E0"/>
<rect x="8" y="3" width="7" height="6" fill="#B8D0DC" stroke="#8AA0B0" stroke-width="0.8"/><rect x="8" y="11" width="7" height="6" fill="#B8D0DC" stroke="#8AA0B0" stroke-width="0.8"/>
<path d="M1 6 H7 M1 14 H7" stroke="#8080E0" stroke-width="1.6"/><path d="M7 6 L5 4 M7 6 L5 8 M7 14 L5 12 M7 14 L5 16" stroke="#8080E0" stroke-width="1.2"/></svg>
<svg style="position:absolute;left:331px;top:116.5px" width="16" height="20.0" viewBox="0 0 20 20" preserveAspectRatio="none"><rect x="1" y="1" width="18" height="3" fill="#8080E0"/>
<rect x="2" y="5" width="7" height="7" fill="#B8D0DC" stroke="#8AA0B0" stroke-width="0.8"/><rect x="11" y="5" width="7" height="7" fill="#B8D0DC" stroke="#8AA0B0" stroke-width="0.8"/>
<path d="M5 13 V19 M14 13 V19" stroke="#8080E0" stroke-width="1.6"/></svg>
<svg style="position:absolute;left:361px;top:116.5px" width="16" height="20.0" viewBox="0 0 20 20" preserveAspectRatio="none"><rect x="1" y="16" width="18" height="3" fill="#8080E0"/>
<rect x="2" y="8" width="7" height="7" fill="#B8D0DC" stroke="#8AA0B0" stroke-width="0.8"/><rect x="11" y="8" width="7" height="7" fill="#B8D0DC" stroke="#8AA0B0" stroke-width="0.8"/>
<path d="M5 1 V7 M14 1 V7" stroke="#8080E0" stroke-width="1.6"/></svg>
<svg style="position:absolute;left:390px;top:116.5px" width="18" height="20.0" viewBox="0 0 20 20" preserveAspectRatio="none"><rect x="1" y="3" width="3" height="15" fill="#8080E0"/><rect x="16" y="3" width="3" height="15" fill="#8080E0"/>
<rect x="5" y="4" width="10" height="6" fill="#B8D0DC" stroke="#8AA0B0" stroke-width="0.8"/><rect x="5" y="11" width="10" height="6" fill="#B8D0DC" stroke="#8AA0B0" stroke-width="0.8"/>
<path d="M5 10 L15 10" stroke="#8080E0" stroke-width="1.4"/></svg>
<svg style="position:absolute;left:431px;top:116.5px" width="17" height="20.0" viewBox="0 0 20 20" preserveAspectRatio="none"><path d="M2 18 L8 12" stroke="#E08020" stroke-width="2.6"/>
<circle cx="12" cy="7" r="5.5" fill="#BCE0FC" stroke="#6AA0D0" stroke-width="1.2"/><circle cx="10.5" cy="5.5" r="2" fill="#fff"/>
<path d="M14 16 H19 M16.5 13.5 V18.5" stroke="#000" stroke-width="1.3"/></svg>
<svg style="position:absolute;left:460px;top:116.5px" width="17" height="20.0" viewBox="0 0 20 20" preserveAspectRatio="none"><path d="M2 18 L8 12" stroke="#E08020" stroke-width="2.6"/>
<circle cx="12" cy="7" r="5.5" fill="#BCE0FC" stroke="#6AA0D0" stroke-width="1.2"/><circle cx="10.5" cy="5.5" r="2" fill="#fff"/>
<path d="M14 17 H19" stroke="#000" stroke-width="1.3"/></svg>
<svg style="position:absolute;left:493.6px;top:116.5px" width="17.4" height="20.0" viewBox="0 0 20 20" preserveAspectRatio="none"><rect x="1" y="1" width="18" height="18" fill="#F2A860"/><path d="M1.5 1 V19 M1 1.5 H19" stroke="#FFF4E8" stroke-width="0.9"/><path d="M4.9 1 V19 M1 4.9 H19" stroke="#FFF4E8" stroke-width="0.9"/><path d="M8.3 1 V19 M1 8.3 H19" stroke="#FFF4E8" stroke-width="0.9"/><path d="M11.7 1 V19 M1 11.7 H19" stroke="#FFF4E8" stroke-width="0.9"/><path d="M15.1 1 V19 M1 15.1 H19" stroke="#FFF4E8" stroke-width="0.9"/><path d="M18.5 1 V19 M1 18.5 H19" stroke="#FFF4E8" stroke-width="0.9"/></svg>
<div style="position:absolute;left:519px;top:113.5px;width:27px;height:26.0px;background:#E4E1D0;border:1px solid #D8D4C0;box-sizing:border-box;"></div>
<svg style="position:absolute;left:521px;top:116px" width="24" height="20" viewBox="0 0 20 20" preserveAspectRatio="none"><rect x="1" y="1" width="18" height="18" fill="#F2A860"/><path d="M1.5 1 V19 M1 1.5 H19" stroke="#FFF4E8" stroke-width="0.9"/><path d="M4.9 1 V19 M1 4.9 H19" stroke="#FFF4E8" stroke-width="0.9"/><path d="M8.3 1 V19 M1 8.3 H19" stroke="#FFF4E8" stroke-width="0.9"/><path d="M11.7 1 V19 M1 11.7 H19" stroke="#FFF4E8" stroke-width="0.9"/><path d="M15.1 1 V19 M1 15.1 H19" stroke="#FFF4E8" stroke-width="0.9"/><path d="M18.5 1 V19 M1 18.5 H19" stroke="#FFF4E8" stroke-width="0.9"/><path d="M4 11 L8 16 L18 7" stroke="#102080" stroke-width="2.6" fill="none"/></svg>
<svg style="position:absolute;left:564px;top:114px" width="19" height="18" viewBox="0 0 20 20" preserveAspectRatio="none"><path d="M3 9 L9 2 L12 6 L16 4 L13 11 L10 8 L7 13 Z" fill="#F0F0D0" stroke="#707060" stroke-width="1"/>
<path d="M11 14 H18 M11 17 H18 M16 12 L18 14 M16 19 L18 17" stroke="#8080C0" stroke-width="1.2" fill="none"/></svg>
<div style="position:absolute;left:264.6px;top:140px;width:688.4px;height:478px;background:#fff;border-top:1.3px solid #7A7A70;border-left:1px solid #8A8A80;box-sizing:border-box;"></div>
<div style="position:absolute;left:329px;top:149.5px;width:624px;height:460.5px;border:2px solid #000;border-right:none;box-sizing:border-box;"></div>
<svg style="position:absolute;left:272.66px;top:149.09px" width="11.49" height="11.25" viewBox="0 0 12 11" preserveAspectRatio="none"><path d="M0.5 2 H11.5" stroke="#106868" stroke-width="1.8"/><rect x="0.5" y="0.6" width="4" height="2.8" fill="#106868"/>
<path d="M6.5 4 L9.8 7.2 L6.5 10.4 L3.2 7.2 Z" fill="#fff" stroke="#000" stroke-width="1.2"/></svg>
<svg style="position:absolute;left:290.66px;top:148.97px" width="11.06" height="10.74" viewBox="0 0 12 12" preserveAspectRatio="none"><path d="M1.5 1.5 L10.5 10.5 M10.5 1.5 L1.5 10.5" stroke="#F07070" stroke-width="2"/></svg>
<div style="position:absolute;left:266px;top:618px;width:687px;height:19px;background:#FCFCFE;"></div>
<svg style="position:absolute;left:266.2px;top:619px" width="15.8" height="18" viewBox="0 0 16 16" preserveAspectRatio="none"><rect x="0.5" y="0.5" width="15" height="15" rx="2" fill="#C1D0F8" stroke="#A8B8E8" stroke-width="1"/><path d="M10 4 L6 8 L10 12" stroke="#3A4A70" stroke-width="2" fill="none"/></svg>
<div style="position:absolute;left:283px;top:620px;width:582.6px;height:16px;background:#C4D2F6;border-radius:2px;border:1px solid #B0C0EC;box-sizing:border-box;"></div>
<div style="position:absolute;left:570.5px;top:624.5px;width:8.0px;height:7.0px;background:repeating-linear-gradient(to right,#8898C8 0 1px,transparent 1px 2px);"></div>
<svg style="position:absolute;left:934.8px;top:620.9px" width="17.6" height="16.2" viewBox="0 0 16 16" preserveAspectRatio="none"><rect x="0.5" y="0.5" width="15" height="15" rx="2" fill="#C1D0F8" stroke="#A8B8E8" stroke-width="1"/><path d="M6 4 L10 8 L6 12" stroke="#3A4A70" stroke-width="2" fill="none"/></svg>
<div style="position:absolute;left:262px;top:637px;width:693.5px;height:1.5px;background:#ACA899;"></div>
<div style="position:absolute;left:472.4px;top:644px;width:133.4px;height:21.5px;border:1px solid #fff;border-right:1.5px solid #333;border-bottom:1.5px solid #333;box-sizing:border-box;"><div class='tc' style='color:#8E8E8E;font-size:12px'>Accept</div></div>
<div style="position:absolute;left:609.2px;top:644px;width:133.6px;height:21.5px;border:1px solid #fff;border-right:1.5px solid #333;border-bottom:1.5px solid #333;box-sizing:border-box;"><div class='tc' style='color:#8E8E8E;font-size:12px'>Discard</div></div>
<div style="position:absolute;left:4.5px;top:670.3px;width:951.0px;height:1.2px;background:#8A8778;"></div>
<div style="position:absolute;left:4.5px;top:671.5px;width:951.0px;height:1.0px;background:#fff;"></div>
<div style="position:absolute;left:560px;top:287.6px;width:1.2px;height:204.0px;background:#111;"></div>
<div style="position:absolute;left:560px;top:287.6px;width:142px;height:1.2px;background:#111;"></div>
<div style="position:absolute;left:560px;top:490.4px;width:142px;height:1.2px;background:#111;"></div>
<div style="position:absolute;left:538px;top:394px;width:22.5px;height:1.2px;background:#111;"></div>
<div style="position:absolute;left:722px;top:320px;width:1.2px;height:46.5px;background:#111;"></div>
<div style="position:absolute;left:722px;top:409.7px;width:1.2px;height:48.0px;background:#111;"></div>
<div style="position:absolute;left:720.3px;top:330px;width:4.7px;height:1.1px;background:#222;"></div>
<div style="position:absolute;left:720.3px;top:420px;width:4.7px;height:1.1px;background:#222;"></div>
<svg style="position:absolute;left:719.6px;top:361.5px" width="6" height="5"><path d="M0.5 0.5 L3 4.5 L5.5 0.5" stroke="#111" stroke-width="1.1" fill="none"/></svg>
<svg style="position:absolute;left:719.6px;top:452.7px" width="6" height="5"><path d="M0.5 0.5 L3 4.5 L5.5 0.5" stroke="#111" stroke-width="1.1" fill="none"/></svg>
<div style="position:absolute;left:710px;top:192.6px;width:203.8px;height:127.4px;background:#E8F0F3;border:1.3px solid #1A1A1A;box-sizing:border-box;"></div>
<div style="position:absolute;left:710px;top:192.6px;width:203.8px;height:24.9px;background:#8EB4C3;border:1.3px solid #1A1A1A;box-sizing:border-box;"><div class="tc" style="font-size:11px">Send E-Mail [SMTP]</div></div>
<div class="t" style="left:711.5px;top:218.6px;font-size:11.5px;">outgoingServer</div>
<div style="position:absolute;left:697px;top:223.0px;width:5.4px;height:5.2px;background:#000;"></div>
<div style="position:absolute;left:702px;top:225.0px;width:8px;height:1.2px;background:#111;"></div>
<div class="t" style="left:711.5px;top:239.8px;font-size:11.5px;">mailUser</div>
<div style="position:absolute;left:697px;top:244.2px;width:5.4px;height:5.2px;background:#000;"></div>
<div style="position:absolute;left:702px;top:246.2px;width:8px;height:1.2px;background:#111;"></div>
<div class="t" style="left:711.5px;top:260.5px;font-size:11.5px;">mailReceiver</div>
<div style="position:absolute;left:697px;top:264.9px;width:5.4px;height:5.2px;background:#000;"></div>
<div style="position:absolute;left:702px;top:266.9px;width:8px;height:1.2px;background:#111;"></div>
<div class="t" style="left:711.5px;top:281.1px;font-size:11.5px;">subject</div>
<div style="position:absolute;left:697px;top:285.5px;width:5.4px;height:5.2px;background:#000;"></div>
<div style="position:absolute;left:702px;top:287.5px;width:8px;height:1.2px;background:#111;"></div>
<div class="t" style="left:711.5px;top:301.7px;font-size:11.5px;">message</div>
<div style="position:absolute;left:697px;top:306.1px;width:5.4px;height:5.2px;background:#000;"></div>
<div style="position:absolute;left:702px;top:308.1px;width:8px;height:1.2px;background:#111;"></div>
<svg style="position:absolute;left:610.67px;top:216.26px;overflow:visible" width="83.33" height="18.91"><path d="M0.6 0.6 H75.33 L82.73 9.45 L75.33 18.31 H0.6 Z" fill="#F88080" stroke="#333" stroke-width="1.2"/></svg>
<div class="t" style="left:612.17px;top:218.71px;font-size:12px;color:#200;">$SMTPServer</div>
<svg style="position:absolute;left:621.04px;top:237.17px;overflow:visible" width="72.96" height="18.82"><path d="M0.6 0.6 H64.96 L72.36 9.41 L64.96 18.22 H0.6 Z" fill="#F88080" stroke="#333" stroke-width="1.2"/></svg>
<div class="t" style="left:622.54px;top:239.58px;font-size:12px;color:#200;">$SMTPUser</div>
<svg style="position:absolute;left:629.97px;top:257.94px;overflow:visible" width="64.03" height="18.5"><path d="M0.6 0.6 H56.03 L63.43 9.25 L56.03 17.9 H0.6 Z" fill="#F88080" stroke="#333" stroke-width="1.2"/></svg>
<div class="t" style="left:631.47px;top:260.19px;font-size:12px;color:#200;">$MailAlias</div>
<div style="position:absolute;left:624.09px;top:299.31px;width:70.12px;height:19.07px;background:#E8F0F3;border:1.2px solid #333;box-sizing:border-box;"><div class='tc' style='font-size:11.5px;letter-spacing:-0.2px'>testmessage</div></div>
<div style="position:absolute;left:385px;top:361.1px;width:153px;height:44.3px;background:#E8F0F3;border:1.3px solid #1A1A1A;box-sizing:border-box;"></div>
<div style="position:absolute;left:385px;top:361.1px;width:153px;height:23.0px;background:#8EB4C3;border:1.3px solid #1A1A1A;box-sizing:border-box;"><div class="tc" style="font-size:11px">Create Unique ID</div></div>
<svg style="position:absolute;left:371px;top:362px" width="13" height="13" viewBox="0 0 12 12" preserveAspectRatio="none"><path d="M7 0.5 L1.5 7 L5.5 7 L3.5 11.5 L10.5 4.5 L6.5 4.5 Z" fill="#F8F020" stroke="#303000" stroke-width="0.9"/></svg>
<div class="t" style="left:536px;top:387.5px;font-size:11.5px;transform:translateX(-100%);">generatedUUID</div>
<div style="position:absolute;left:545.9px;top:391.8px;width:5.5px;height:5.5px;background:#000;"></div>
<div style="position:absolute;left:710px;top:366.5px;width:203.8px;height:43.2px;background:#E8F0F3;border:1.3px solid #1A1A1A;box-sizing:border-box;"></div>
<div style="position:absolute;left:710px;top:366.5px;width:203.8px;height:22.0px;background:#8EB4C3;border:1.3px solid #1A1A1A;box-sizing:border-box;"><div class="tc" style="font-size:11px">Time[Delay]</div></div>
<div class="t" style="left:711.5px;top:391.5px;font-size:11.5px;">seconds</div>
<div style="position:absolute;left:684.1px;top:390.5px;width:10.6px;height:18.1px;background:#E8F0F3;border:1.2px solid #333;box-sizing:border-box;"><div class='tc' style='font-size:12px'>5</div></div>
<div style="position:absolute;left:697px;top:396.6px;width:5.4px;height:5.2px;background:#000;"></div>
<div style="position:absolute;left:694.7px;top:398.6px;width:15.3px;height:1.2px;background:#111;"></div>
<div style="position:absolute;left:710px;top:457.7px;width:203.8px;height:43.8px;background:#E8F0F3;border:1.3px solid #1A1A1A;box-sizing:border-box;"></div>
<div style="position:absolute;left:710px;top:457.7px;width:203.8px;height:22.7px;background:#8EB4C3;border:1.3px solid #1A1A1A;box-sizing:border-box;"><div class="tc" style="font-size:11px">Check Incoming Mail</div></div>
<div class="t" style="left:711.5px;top:483.5px;font-size:11.5px;">searchString</div>
<div style="position:absolute;left:697px;top:487.7px;width:5.4px;height:5.3px;background:#000;"></div>
</div>
</body></html>
